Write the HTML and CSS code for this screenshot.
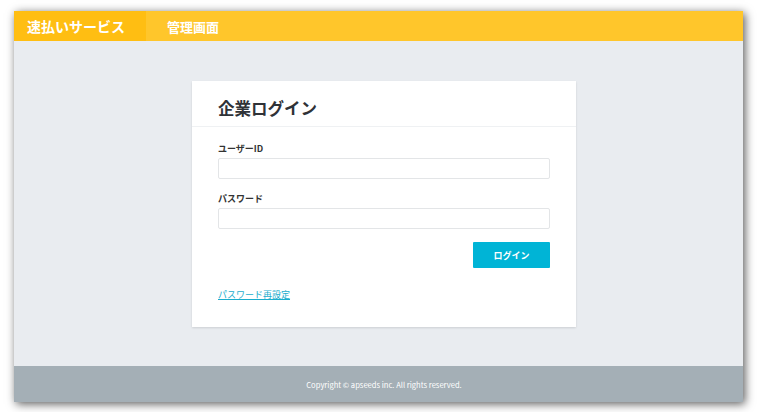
FILE: index.html
```html
<!DOCTYPE html>
<html lang="ja">
<head>
    <meta charset="UTF-8">
    <meta name="viewport" content="width=device-width, initial-scale=1.0">
    <title>企業ログイン</title>
    <link rel="stylesheet" href="styles.css">
</head>
<body>
    <div class="window">
        <div class="header">
            <div class="brand">速払いサービス</div>
            <div class="header-title">管理画面</div>
        </div>
        <div class="main">
            <div class="card">
                <div class="card-head">
                    <h1>企業ログイン</h1>
                </div>
                <form class="card-body">
                    <label class="field-label" for="user-id">ユーザーID</label>
                    <input class="field-input" type="text" id="user-id">
                    <label class="field-label" for="password">パスワード</label>
                    <input class="field-input" type="password" id="password">
                    <div class="actions">
                        <button type="button" class="login-btn">ログイン</button>
                    </div>
                    <a class="reset-link" href="#">パスワード再設定</a>
                </form>
            </div>
        </div>
        <div class="footer">Copyright © apseeds inc. All rights reserved.</div>
    </div>
</body>
</html>
```

FILE: styles.css
```css
body {
    margin: 0;
    padding: 11px 14px;
    background-color: #fff;
    font-family: "Noto Sans CJK JP", "Noto Sans", sans-serif;
    color: #333;
}
.window {
    width: 729px;
    height: 391px;
    display: flex;
    flex-direction: column;
    background-color: #e9ecf0;
    box-shadow: 2px 2px 9px rgba(0, 0, 0, 0.65);
}
.header {
    height: 30px;
    display: flex;
    align-items: stretch;
    background-color: #ffc62b;
    color: #fff;
    font-weight: bold;
}
.brand {
    width: 132px;
    box-sizing: border-box;
    padding-left: 13px;
    display: flex;
    align-items: center;
    font-size: 14px;
    background-color: #ffbe12;
}
.header-title {
    padding-left: 21px;
    display: flex;
    align-items: center;
    font-size: 13px;
}
.main {
    flex: 1;
    display: flex;
    justify-content: center;
    align-items: flex-start;
    padding: 40px 0 0 11px;
}
.card {
    width: 384px;
    background-color: #fff;
    box-shadow: 0 1px 2px rgba(0, 0, 0, 0.12);
}
.card-head {
    height: 46px;
    box-sizing: border-box;
    padding: 8px 0 0 26px;
    display: flex;
    align-items: center;
    border-bottom: 1px solid #eff1f3;
}
.card-head h1 {
    margin: 0;
    font-size: 16.5px;
    font-weight: bold;
    color: #2f3237;
}
.card-body {
    display: flex;
    flex-direction: column;
    padding: 16px 26px 26px;
}
.field-label {
    font-size: 9px;
    font-weight: bold;
    line-height: 12px;
    color: #333;
    margin-bottom: 3px;
}
.field-input {
    height: 21px;
    box-sizing: border-box;
    border: 1px solid #e3e5e7;
    border-radius: 2px;
    margin: 0 0 14px;
    padding: 0 6px;
}
.actions {
    display: flex;
    justify-content: flex-end;
    margin-top: -1px;
}
.login-btn {
    width: 77px;
    height: 26px;
    border: none;
    border-radius: 1px;
    background-color: #00b4d6;
    color: #fff;
    font-family: inherit;
    font-size: 9px;
    font-weight: bold;
    cursor: pointer;
}
.reset-link {
    margin-top: 21px;
    align-self: flex-start;
    font-size: 9px;
    line-height: 12px;
    color: #1badcd;
}
.footer {
    height: 36px;
    padding-left: 11px;
    display: flex;
    align-items: center;
    justify-content: center;
    background-color: #a4afb6;
    color: #fff;
    font-size: 7.6px;
}
```
